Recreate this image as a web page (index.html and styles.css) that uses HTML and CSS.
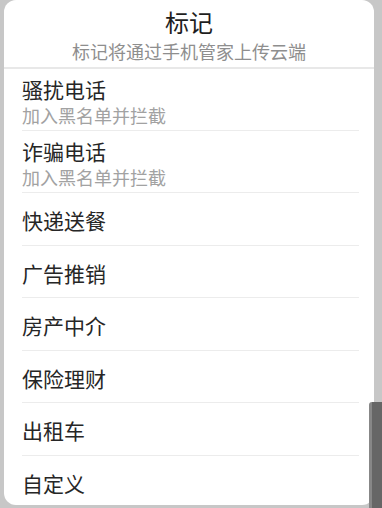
FILE: index.html
```html
<!doctype html>
<html lang="zh-CN">
<head>
	<meta charset="UTF-8">
	<title>标记</title>
	<link rel="stylesheet" href="styles.css">
</head>
<body>
	<div class="sheet">
		<div class="sheet-head">
			<div class="sheet-title">标记</div>
			<div class="sheet-sub">标记将通过手机管家上传云端</div>
		</div>
		<ul class="mark-list">
			<li class="two"><div class="name">骚扰电话</div><div class="desc">加入黑名单并拦截</div></li>
			<li class="two"><div class="name">诈骗电话</div><div class="desc">加入黑名单并拦截</div></li>
			<li><div class="name">快递送餐</div></li>
			<li><div class="name">广告推销</div></li>
			<li><div class="name">房产中介</div></li>
			<li><div class="name">保险理财</div></li>
			<li><div class="name">出租车</div></li>
			<li><div class="name">自定义</div></li>
		</ul>
	</div>
	<div class="side-bar"></div>
</body>
</html>
```

FILE: styles.css
```css
body,ul,li,div{
	margin:0;
	padding:0;
}
body{
	background:#c7c7c7;
	font-family:"Noto Sans CJK SC","Noto Sans",sans-serif;
	height:508px;
	overflow:hidden;
	position:relative;
}
ul li{
	list-style:none;
}
.sheet{
	margin-left:4px;
	width:370px;
	height:505px;
	background:#fff;
	border-radius:12px;
	overflow:hidden;
}
.sheet-head{
	text-align:center;
	padding:10px 0 7px;
	border-bottom:2px solid #e8e8e8;
}
.sheet-title{
	font-size:24px;
	line-height:24px;
	color:#1e1e1e;
}
.sheet-sub{
	margin-top:8px;
	font-size:18px;
	line-height:18px;
	color:#8e8e8e;
}
.mark-list li{
	margin:0 15px 0 18px;
	padding:15px 0 11.6px;
	border-bottom:1px solid #ececec;
}
.mark-list li .name{
	font-size:21px;
	line-height:25px;
	color:#262626;
}
.mark-list li.two{
	padding:8px 0 0;
}
.mark-list li.two .name{
	line-height:24px;
}
.mark-list li.two .desc{
	font-size:18px;
	line-height:29px;
	color:#a2a2a2;
}
.side-bar{
	position:absolute;
	left:369px;
	top:402px;
	width:13px;
	height:106px;
	border-radius:3px 0 0 0;
	background:linear-gradient(to right,#878787 0,#878787 3px,#666 3px);
}
```
